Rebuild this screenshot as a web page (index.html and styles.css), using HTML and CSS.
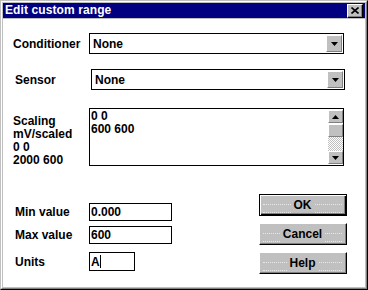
FILE: index.html
```html
<!DOCTYPE html>
<html lang="en">
<head>
  <meta charset="UTF-8">
  <title>Edit custom range</title>
  <link rel="stylesheet" href="styles.css">
</head>
<body>
  <div class="window">
    <div class="frame">
      <div class="titlebar">
        <span class="title">Edit custom range</span>
        <span class="close">
          <svg width="8" height="7" viewBox="0 0 8 7"><path d="M0.5 0.5 L7.5 6.5 M7.5 0.5 L0.5 6.5" stroke="#000" stroke-width="1.6" fill="none"/></svg>
        </span>
      </div>

      <div class="client">
        <div class="row row-cond">
          <span class="label">Conditioner</span>
          <div class="combo">
            <span class="value">None</span>
            <span class="drop"><svg width="7" height="4" viewBox="0 0 7 4"><polygon points="0,0 7,0 3.5,4" fill="#000"/></svg></span>
          </div>
        </div>

        <div class="row row-sensor">
          <span class="label">Sensor</span>
          <div class="combo">
            <span class="value">None</span>
            <span class="drop"><svg width="7" height="4" viewBox="0 0 7 4"><polygon points="0,0 7,0 3.5,4" fill="#000"/></svg></span>
          </div>
        </div>

        <div class="row row-scale">
          <div class="label label-block">
            <div>Scaling</div>
            <div>mV/scaled</div>
            <div>0 0</div>
            <div>2000 600</div>
          </div>
          <div class="memo">
            <div class="memo-text">
              <div>0 0</div>
              <div>600 600</div>
            </div>
            <div class="scroll">
              <span class="sbtn"><svg width="7" height="4" viewBox="0 0 7 4"><polygon points="0,4 7,4 3.5,0" fill="#000"/></svg></span>
              <span class="thumb"></span>
              <span class="track"></span>
              <span class="sbtn"><svg width="7" height="4" viewBox="0 0 7 4"><polygon points="0,0 7,0 3.5,4" fill="#000"/></svg></span>
            </div>
          </div>
        </div>

        <div class="bottom">
          <div class="fields">
            <div class="field">
              <span class="label">Min value</span>
              <div class="input">0.000</div>
            </div>
            <div class="field field-max">
              <span class="label">Max value</span>
              <div class="input">600</div>
            </div>
            <div class="field field-units">
              <span class="label">Units</span>
              <div class="input input-short">A<span class="caret"></span></div>
            </div>
          </div>

          <div class="buttons">
            <div class="btn btn-default"><span>OK</span></div>
            <div class="btn"><span>Cancel</span></div>
            <div class="btn"><span>Help</span></div>
          </div>
        </div>
      </div>
    </div>
  </div>
</body>
</html>
```

FILE: styles.css
```css
:root {
  --face: #c0c0c0;
  --shadow: #808080;
  --navy: #000080;
}

html,
body {
  margin: 0;
  background: #fff;
}

.window {
  width: 368px;
  height: 290px;
  box-sizing: border-box;
  border: 1px solid;
  border-color: var(--face) #000 #000 var(--face);
  font-family: "Liberation Sans", Arial, sans-serif;
  font-size: 12px;
  font-weight: bold;
  color: #000;
}

.frame {
  height: 100%;
  box-sizing: border-box;
  border: 1px solid;
  border-color: #fff var(--shadow) var(--shadow) #fff;
  padding: 1px;
  background: var(--face);
  display: flex;
  flex-direction: column;
}

/* title bar */
.titlebar {
  height: 15px;
  background: var(--navy);
  color: #fff;
  display: flex;
  align-items: center;
  padding: 0 2px;
}

.title {
  flex: 1;
  line-height: 15px;
  letter-spacing: 0.1px;
}

.close {
  width: 16px;
  height: 14px;
  box-sizing: border-box;
  background: var(--face);
  border: 1px solid;
  border-color: #fff #000 #000 #fff;
  box-shadow: inset -1px -1px var(--shadow);
  display: flex;
  align-items: center;
  justify-content: center;
}

.close svg {
  display: block;
}

/* dialog body */
.client {
  flex: 1;
  margin-top: 1px;
  background: #fff;
}

.row {
  display: flex;
  align-items: center;
}

.label {
  box-sizing: border-box;
  width: 86px;
  padding-left: 10px;
}

.row-cond {
  margin-top: 14px;
}

.row-sensor {
  margin-top: 15px;
}

.row-sensor .label {
  width: 88px;
  padding-left: 12px;
}

.row-sensor .combo {
  width: 254px;
}

.combo {
  width: 255px;
  height: 21px;
  box-sizing: border-box;
  border: 1px solid #000;
  display: flex;
  align-items: center;
  padding-left: 3px;
}

.value {
  flex: 1;
}

.drop,
.sbtn {
  width: 16px;
  height: 17px;
  box-sizing: border-box;
  background: var(--face);
  border: 1px solid;
  border-color: #fff var(--shadow) var(--shadow) #fff;
  display: flex;
  align-items: center;
  justify-content: center;
}

.drop {
  margin-right: 1px;
}

.drop svg,
.sbtn svg {
  display: block;
}

/* scaling memo */
.row-scale {
  align-items: flex-start;
  margin-top: 18px;
}

.label-block {
  padding-top: 7px;
  line-height: 13px;
}

.memo {
  width: 255px;
  height: 58px;
  box-sizing: border-box;
  border: 1px solid #000;
  display: flex;
}

.memo-text {
  flex: 1;
  padding: 1px 0 0 1px;
  line-height: 13px;
}

.scroll {
  width: 15px;
  display: flex;
  flex-direction: column;
  padding: 1px 0;
}

.scroll .sbtn {
  width: 15px;
  height: 13px;
}

.thumb {
  height: 13px;
  margin-top: 1px;
  box-sizing: border-box;
  background: var(--face);
  border: 1px solid;
  border-color: #fff var(--shadow) var(--shadow) #fff;
}

.track {
  flex: 1;
  background-image: repeating-conic-gradient(var(--face) 0 25%, #fff 0 50%);
  background-size: 2px 2px;
}

/* lower part */
.bottom {
  display: flex;
  margin-top: 27px;
}

.fields {
  width: 256px;
  margin-top: 9px;
  display: flex;
  flex-direction: column;
}

.field {
  display: flex;
  align-items: center;
}

.field .label {
  padding-left: 12px;
}

.field-max {
  margin-top: 5px;
}

.field-units {
  margin-top: 8px;
}

.input {
  width: 83px;
  height: 18px;
  box-sizing: border-box;
  border: 1px solid #000;
  padding-left: 1px;
  display: flex;
  align-items: center;
}

.input-short {
  width: 46px;
  height: 19px;
}

.caret {
  width: 1px;
  height: 13px;
  background: #000;
}

.buttons {
  display: flex;
  flex-direction: column;
  gap: 7px;
}

.btn {
  width: 88px;
  height: 22px;
  box-sizing: border-box;
  background: var(--face);
  border: 1px solid;
  border-color: #fff #000 #000 #fff;
  box-shadow: inset -1px -1px var(--shadow);
  display: flex;
  align-items: center;
  gap: 3px;
  padding: 0 4px 0 3px;
}

.btn::before,
.btn::after {
  content: "";
  flex: 1;
  height: 7px;
  margin-top: 6px;
  border-top: 1px dotted #e8e8e8;
  border-bottom: 1px dotted #e8e8e8;
}

.btn-default {
  border-color: #000;
  box-shadow: inset 1px 1px #fff, inset -1px -1px #000, inset -2px -2px var(--shadow);
}
```
